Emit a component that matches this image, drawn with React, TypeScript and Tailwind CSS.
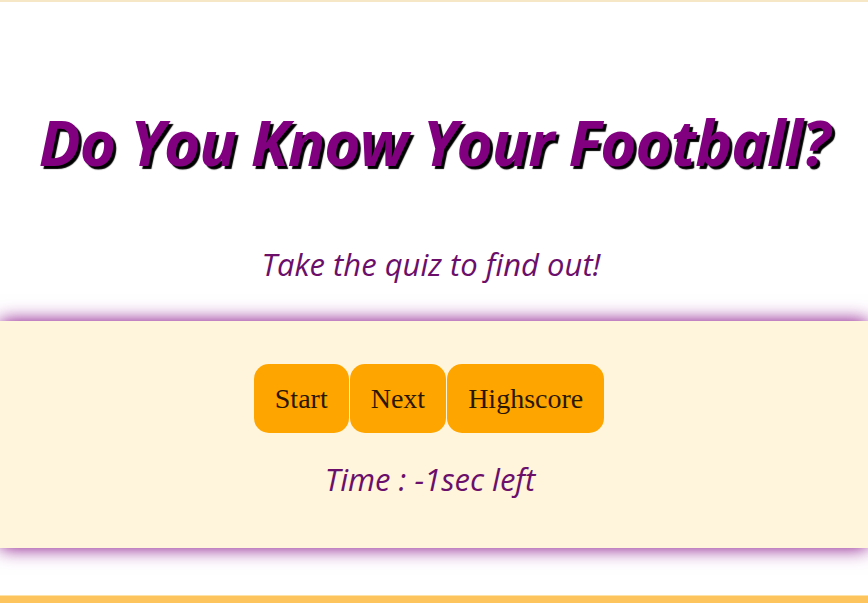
import React from "react";

export default function App() {
  return (
    <div className="min-h-[603px] w-full bg-white flex flex-col overflow-hidden">
      <div className="h-[2px] bg-[#f6e7c6]" />
      <header className="flex flex-col items-center h-[319px]">
        <h1
          className="mt-[97px] text-[62px] leading-[86px] font-bold italic text-[#800080] tracking-[-1px] whitespace-nowrap [text-shadow:3px_3px_1px_#000]"
          style={{ fontFamily: '"Open Sans", "DejaVu Sans", sans-serif' }}
        >
          Do You Know Your Football?
        </h1>
        <p
          className="mt-[59px] mr-[6px] text-[31px] leading-[40px] italic text-[#6b0f6b]"
          style={{ fontFamily: '"Open Sans", "Noto Sans", sans-serif' }}
        >
          Take the quiz to find out!
        </p>
      </header>
      <section className="h-[227px] bg-[#fff5dc] shadow-[0_0_18px_#800080] flex flex-col items-center">
        <div className="mt-[43px] mr-[10px] flex gap-[1px]">
          {["Start", "Next", "Highscore"].map((t) => (
            <button
              key={t}
              className="h-[69px] px-[21px] rounded-[15px] bg-[#ffa500] text-[28px] text-[#2b1600]"
              style={{ fontFamily: 'Georgia, "Liberation Serif", serif' }}
            >
              {t}
            </button>
          ))}
        </div>
        <p
          className="mt-[26px] mr-[8px] text-[31px] leading-[40px] italic text-[#6b0f6b]"
          style={{ fontFamily: '"Open Sans", "Noto Sans", sans-serif' }}
        >
          Time : -1sec left
        </p>
      </section>
      <div className="h-[47px]" />
      <div className="h-[8px] bg-[#fdc35c] border-t border-[#fde3a8]" />
    </div>
  );
}
